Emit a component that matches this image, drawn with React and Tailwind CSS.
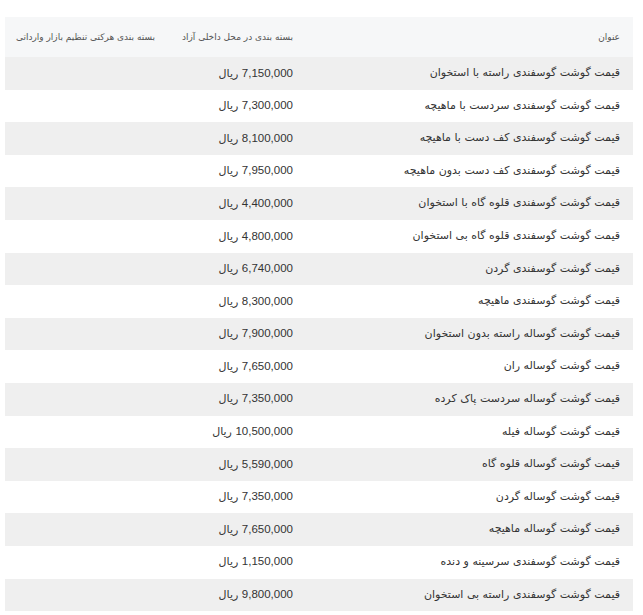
const rows = [
  ['قیمت گوشت گوسفندی راسته با استخوان', '7,150,000'],
  ['قیمت گوشت گوسفندی سردست با ماهیچه', '7,300,000'],
  ['قیمت گوشت گوسفندی کف دست با ماهیچه', '8,100,000'],
  ['قیمت گوشت گوسفندی کف دست بدون ماهیچه', '7,950,000'],
  ['قیمت گوشت گوسفندی قلوه گاه با استخوان', '4,400,000'],
  ['قیمت گوشت گوسفندی قلوه گاه بی استخوان', '4,800,000'],
  ['قیمت گوشت گوسفندی گردن', '6,740,000'],
  ['قیمت گوشت گوسفندی ماهیچه', '8,300,000'],
  ['قیمت گوشت گوساله راسته بدون استخوان', '7,900,000'],
  ['قیمت گوشت گوساله ران', '7,650,000'],
  ['قیمت گوشت گوساله سردست پاک کرده', '7,350,000'],
  ['قیمت گوشت گوساله فیله', '10,500,000'],
  ['قیمت گوشت گوساله قلوه گاه', '5,590,000'],
  ['قیمت گوشت گوساله گردن', '7,350,000'],
  ['قیمت گوشت گوساله ماهیچه', '7,650,000'],
  ['قیمت گوشت گوسفندی سرسینه و دنده', '1,150,000'],
  ['قیمت گوشت گوسفندی راسته بی استخوان', '9,800,000'],
];

export default function App() {
  return (
    <div className="w-[643px] h-[615px] bg-white pt-[17px] pl-[5px] pr-[10px] overflow-hidden" style={{ fontFamily: '"DejaVu Sans", sans-serif' }}>
      <table dir="rtl" className="w-[628px] border-collapse table-fixed text-right">
        <colgroup>
          <col className="w-[328px]" />
          <col className="w-[138px]" />
          <col className="w-[162px]" />
        </colgroup>
        <thead>
          <tr className="bg-[#f6f7f8] h-[40px] text-[9px] text-[#555] whitespace-nowrap">
            <th className="font-normal pr-[13px] pt-[2px]">عنوان</th>
            <th className="font-normal pr-[12px] pt-[2px]">بسته بندی در محل داخلی آزاد</th>
            <th className="font-normal pr-[12px] pt-[2px]">بسته بندی هرکتی تنظیم بازار وارداتی</th>
          </tr>
        </thead>
        <tbody>
          {rows.map(([title, price], i) => (
            <tr key={i} className={`h-[32.6px] text-[11px] text-[#333] whitespace-nowrap ${i % 2 === 0 ? 'bg-[#efefef]' : 'bg-white'}`}>
              <td className="pr-[13px]">{title}</td>
              <td className="pr-[12px]">
                <span style={{ fontFamily: '"Liberation Sans", sans-serif' }} className="text-[11.5px]">{price}</span> ریال
              </td>
              <td className="pr-[12px]"></td>
            </tr>
          ))}
        </tbody>
      </table>
    </div>
  );
}
